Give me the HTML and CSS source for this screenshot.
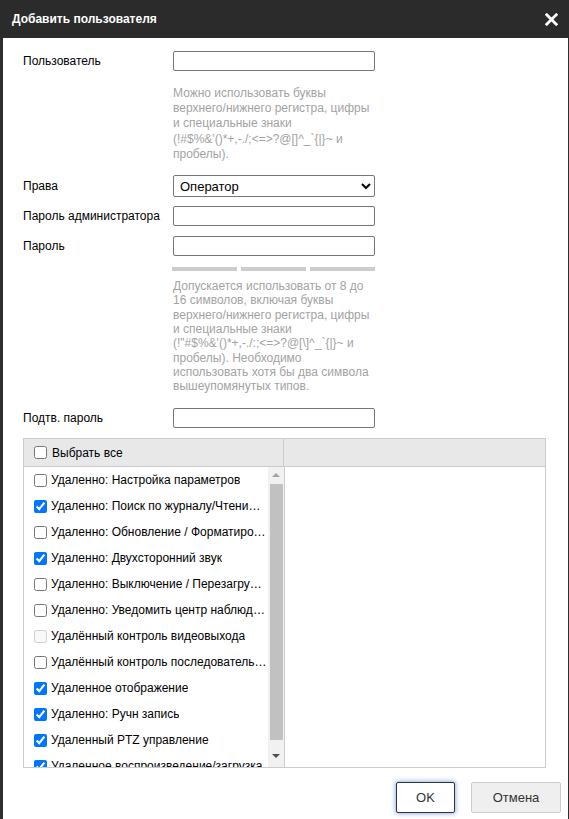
FILE: index.html
```html
<!DOCTYPE html>
<html lang="ru">
<head>
<meta charset="utf-8">
<title>Добавить пользователя</title>
<link rel="stylesheet" href="styles.css">
</head>
<body>
<div class="dialog">
  <div class="titlebar">
    <span class="title">Добавить пользователя</span>
    <svg class="close" width="13" height="13" viewBox="0 0 13 13"><path d="M1.8 1.8 L11.2 11.2 M11.2 1.8 L1.8 11.2" stroke="#fff" stroke-width="2.8" stroke-linecap="square"/></svg>
  </div>
  <div class="content">
    <div class="row r-user"><span class="lbl">Пользователь</span><input class="txt" type="text"></div>
    <div class="hint hint1">Можно использовать буквы<br>верхнего/нижнего регистра, цифры<br>и специальные знаки<br>(!#$%&amp;'()*+,-./;&lt;=&gt;?@[]^_`{|}~ и<br>пробелы).</div>
    <div class="row r-role"><span class="lbl">Права</span><select class="sel"><option>Оператор</option></select></div>
    <div class="row r-admin"><span class="lbl">Пароль администратора</span><input class="txt" type="password"></div>
    <div class="row r-pass"><span class="lbl">Пароль</span><input class="txt" type="password"></div>
    <div class="strength"><span class="bar"></span><span class="bar"></span><span class="bar"></span></div>
    <div class="hint hint2">Допускается использовать от 8 до<br>16 символов, включая буквы<br>верхнего/нижнего регистра, цифры<br>и специальные знаки<br>(!"#$%&amp;'()*+,-./:;&lt;=&gt;?@[\]^_`{|}~ и<br>пробелы). Необходимо<br>использовать хотя бы два символа<br>вышеупомянутых типов.</div>
    <div class="row r-confirm"><span class="lbl">Подтв. пароль</span><input class="txt" type="password"></div>

    <div class="perm">
      <div class="perm-head">
        <div class="ph-left"><input type="checkbox" class="cb"><span>Выбрать все</span></div>
        <div class="ph-right"></div>
      </div>
      <div class="perm-body">
        <div class="list-wrap">
          <div class="item"><input type="checkbox" class="cb"><span class="itxt">Удаленно: Настройка параметров</span></div>
          <div class="item"><input type="checkbox" class="cb" checked><span class="itxt">Удаленно: Поиск по журналу/Чтение состояния</span></div>
          <div class="item"><input type="checkbox" class="cb"><span class="itxt">Удаленно: Обновление / Форматирование</span></div>
          <div class="item"><input type="checkbox" class="cb" checked><span class="itxt">Удаленно: Двухсторонний звук</span></div>
          <div class="item"><input type="checkbox" class="cb"><span class="itxt">Удаленно: Выключение / Перезагрузка</span></div>
          <div class="item"><input type="checkbox" class="cb"><span class="itxt">Удаленно: Уведомить центр наблюдения</span></div>
          <div class="item"><input type="checkbox" class="cb" disabled><span class="itxt">Удалённый контроль видеовыхода</span></div>
          <div class="item"><input type="checkbox" class="cb"><span class="itxt">Удалённый контроль последовательного порта</span></div>
          <div class="item"><input type="checkbox" class="cb" checked><span class="itxt">Удаленное отображение</span></div>
          <div class="item"><input type="checkbox" class="cb" checked><span class="itxt">Удаленно: Ручн запись</span></div>
          <div class="item"><input type="checkbox" class="cb" checked><span class="itxt">Удаленный PTZ управление</span></div>
          <div class="item"><input type="checkbox" class="cb" checked><span class="itxt">Удаленное воспроизведение/загрузка</span></div>
        </div>
        <div class="scrollbar">
          <span class="arrow up"></span>
          <span class="thumb"></span>
          <span class="arrow down"></span>
        </div>
        <div class="right-pane"></div>
      </div>
    </div>

    <div class="buttons">
      <button class="btn btn-ok">OK</button>
      <button class="btn btn-cancel">Отмена</button>
    </div>
  </div>
</div>
</body>
</html>
```
FILE: styles.css
```css
html, body {
  margin: 0;
  padding: 0;
  background: #2e2e2e;
  height: 819px;
  overflow: hidden;
}
body {
  font-family: "Liberation Sans", Arial, sans-serif;
  font-size: 12px;
  color: #000;
}
.dialog {
  width: 569px;
  height: 819px;
  display: flex;
  flex-direction: column;
}
.titlebar {
  height: 38px;
  background: #2b2b2b;
  display: flex;
  align-items: center;
  justify-content: space-between;
  padding: 0 11px 0 12px;
}
.title {
  color: #fff;
  font-weight: bold;
  font-size: 12px;
}
.close {
  display: block;
}
.content {
  flex: 1;
  background: #fff;
  margin: 0 1px 0 3px;
  padding: 13px 0 0 20px;
}
.row {
  display: flex;
  align-items: center;
}
.lbl {
  width: 150px;
  flex: none;
  color: #000;
}
.txt {
  box-sizing: border-box;
  width: 202px;
  height: 20px;
  margin: 0;
  padding: 1px 4px;
  border: 1px solid #767676;
  border-radius: 2px;
  font: 12px "Liberation Sans", Arial, sans-serif;
  background: #fff;
}
.sel {
  box-sizing: border-box;
  width: 202px;
  height: 22px;
  margin: 0;
  padding: 0 2px;
  border: 1px solid #767676;
  border-radius: 2px;
  font: 13px "Liberation Sans", Arial, sans-serif;
  color: #000;
  background: #fff;
}
.hint {
  margin-left: 150px;
  width: 220px;
  color: #a3a3a3;
  font-size: 12px;
}
.hint1 {
  line-height: 15.2px;
  margin-top: 15px;
}
.hint2 {
  line-height: 14.3px;
  margin-top: 8px;
}
.r-role { margin-top: 13px; }
.r-admin { margin-top: 9px; }
.r-pass { margin-top: 10px; }
.r-confirm { margin-top: 15px; }
.strength {
  margin: 11px 0 0 149px;
  width: 203px;
  display: flex;
  gap: 4px;
}
.bar {
  flex: 1;
  height: 4px;
  background: #cccccc;
}
.perm {
  margin-top: 10px;
  width: 523px;
  border: 1px solid #cccccc;
  box-sizing: border-box;
}
.perm-head {
  display: flex;
  height: 27px;
  background: #e8e8e8;
  border-bottom: 1px solid #cccccc;
}
.ph-left {
  width: 260px;
  border-right: 1px solid #cccccc;
  display: flex;
  align-items: center;
  padding-left: 10px;
  box-sizing: border-box;
  font-size: 12px;
}
.ph-left .cb { margin: 0 5px 0 0; }
.ph-right { flex: 1; }
.perm-body {
  display: flex;
  height: 300px;
}
.list-wrap {
  width: 244px;
  height: 300px;
  overflow: hidden;
  padding-left: 10px;
  box-sizing: border-box;
}
.item {
  height: 26px;
  display: flex;
  align-items: center;
  font-size: 12px;
}
.item .cb { margin: 0 4px 0 0; flex: none; }
.itxt {
  white-space: nowrap;
  overflow: hidden;
  text-overflow: ellipsis;
  max-width: 216px;
}
.cb {
  width: 13px;
  height: 13px;
}
.scrollbar {
  width: 16px;
  height: 300px;
  background: #f1f1f1;
  border-right: 1px solid #cccccc;
  display: flex;
  flex-direction: column;
  align-items: center;
}
.arrow {
  width: 0;
  height: 0;
  border-left: 4px solid transparent;
  border-right: 4px solid transparent;
}
.arrow.up {
  border-bottom: 4px solid #a3a3a3;
  margin-top: 6px;
}
.arrow.down {
  border-top: 4px solid #505050;
  margin-top: 14px;
}
.thumb {
  width: 13px;
  height: 256px;
  background: #c1c1c1;
  margin-top: 7px;
  margin-left: 1px;
}
.right-pane { flex: 1; }
.buttons {
  display: flex;
  justify-content: flex-end;
  gap: 16px;
  margin: 14px 7px 0 0;
}
.btn {
  height: 31px;
  font: 13px "Liberation Sans", Arial, sans-serif;
  color: #333;
  border-radius: 2px;
  padding: 0;
}
.btn-ok {
  width: 59px;
  background: #fff;
  border: 1px solid #333;
  box-shadow: 0 0 4px 1px #9bb4ee;
}
.btn-cancel {
  width: 90px;
  background: #efefef;
  border: 1px solid #cccccc;
}
```
